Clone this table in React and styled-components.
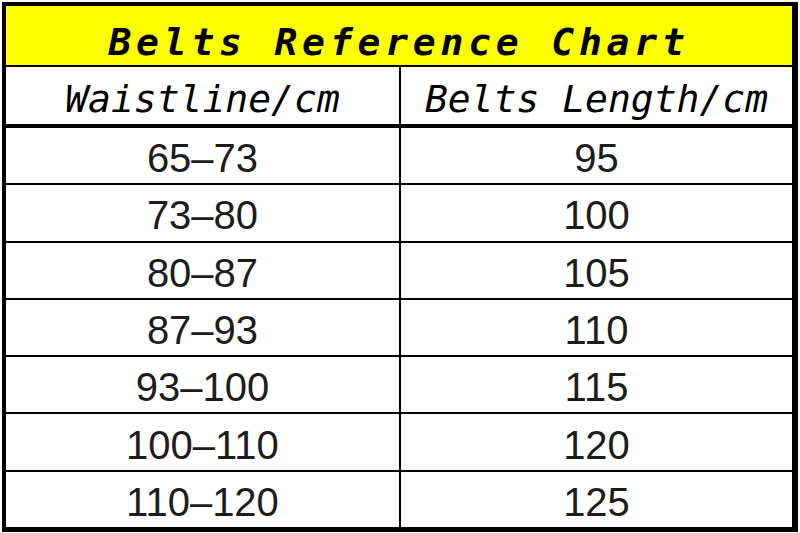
import React from "react";
import styled, { createGlobalStyle } from "styled-components";

const Global = createGlobalStyle`
  html, body { margin: 0; padding: 0; background: #ffffff; }
  body { width: 800px; height: 533px; overflow: hidden; }
`;

const Page = styled.div`
  width: 800px;
  height: 533px;
  padding: 2px 2px 1px 2px;
  box-sizing: border-box;
  background: #fff;
`;

const Chart = styled.div`
  box-sizing: border-box;
  width: 796px;
  height: 530px;
  border-style: solid;
  border-color: #000;
  border-width: 4px 6px 5px 4px;
  display: flex;
  flex-direction: column;
`;

const Title = styled.div`
  height: 61px;
  flex: none;
  background: #ffff00;
  border-bottom: 2px solid #000;
  display: flex;
  align-items: center;
  justify-content: center;
  padding-top: 12px;
  box-sizing: border-box;
  font-family: "DejaVu Sans Mono", "Liberation Mono", monospace;
  font-weight: bold;
  font-style: italic;
  font-size: 38px;
  letter-spacing: 4.8px;
  color: #000;
  white-space: pre;
`;

const Row = styled.div`
  display: grid;
  grid-template-columns: 393px 1fr;
  flex: ${(p) => (p.$header ? "none" : "1")};
  height: ${(p) => (p.$header ? "61px" : "auto")};
  box-sizing: border-box;
  border-bottom: ${(p) => (p.$header ? "4px" : p.$last ? "0" : "2px")} solid #000;
`;

const Cell = styled.div`
  display: flex;
  align-items: center;
  justify-content: center;
  box-sizing: border-box;
  border-left: ${(p) => (p.$right ? "2px solid #000" : "none")};
  padding-top: ${(p) => (p.$header ? "7px" : "6px")};
  white-space: pre;
  font-family: ${(p) =>
    p.$header
      ? `"DejaVu Sans Mono", "Liberation Mono", monospace`
      : `"Liberation Sans", Arial, sans-serif`};
  font-style: ${(p) => (p.$header ? "italic" : "normal")};
  font-size: ${(p) => (p.$header ? "38px" : "40px")};
  color: ${(p) => (p.$header ? "#000" : "#1c1c1c")};
`;

const rows = [
  ["65–73", "95"],
  ["73–80", "100"],
  ["80–87", "105"],
  ["87–93", "110"],
  ["93–100", "115"],
  ["100–110", "120"],
  ["110–120", "125"],
];

export default function App() {
  return (
    <Page>
      <Global />
      <Chart>
        <Title>Belts Reference Chart</Title>
        <Row $header>
          <Cell $header>Waistline/cm</Cell>
          <Cell $header $right>Belts Length/cm</Cell>
        </Row>
        {rows.map(([w, l], i) => (
          <Row key={w} $last={i === rows.length - 1}>
            <Cell>{w}</Cell>
            <Cell $right>{l}</Cell>
          </Row>
        ))}
      </Chart>
    </Page>
  );
}
